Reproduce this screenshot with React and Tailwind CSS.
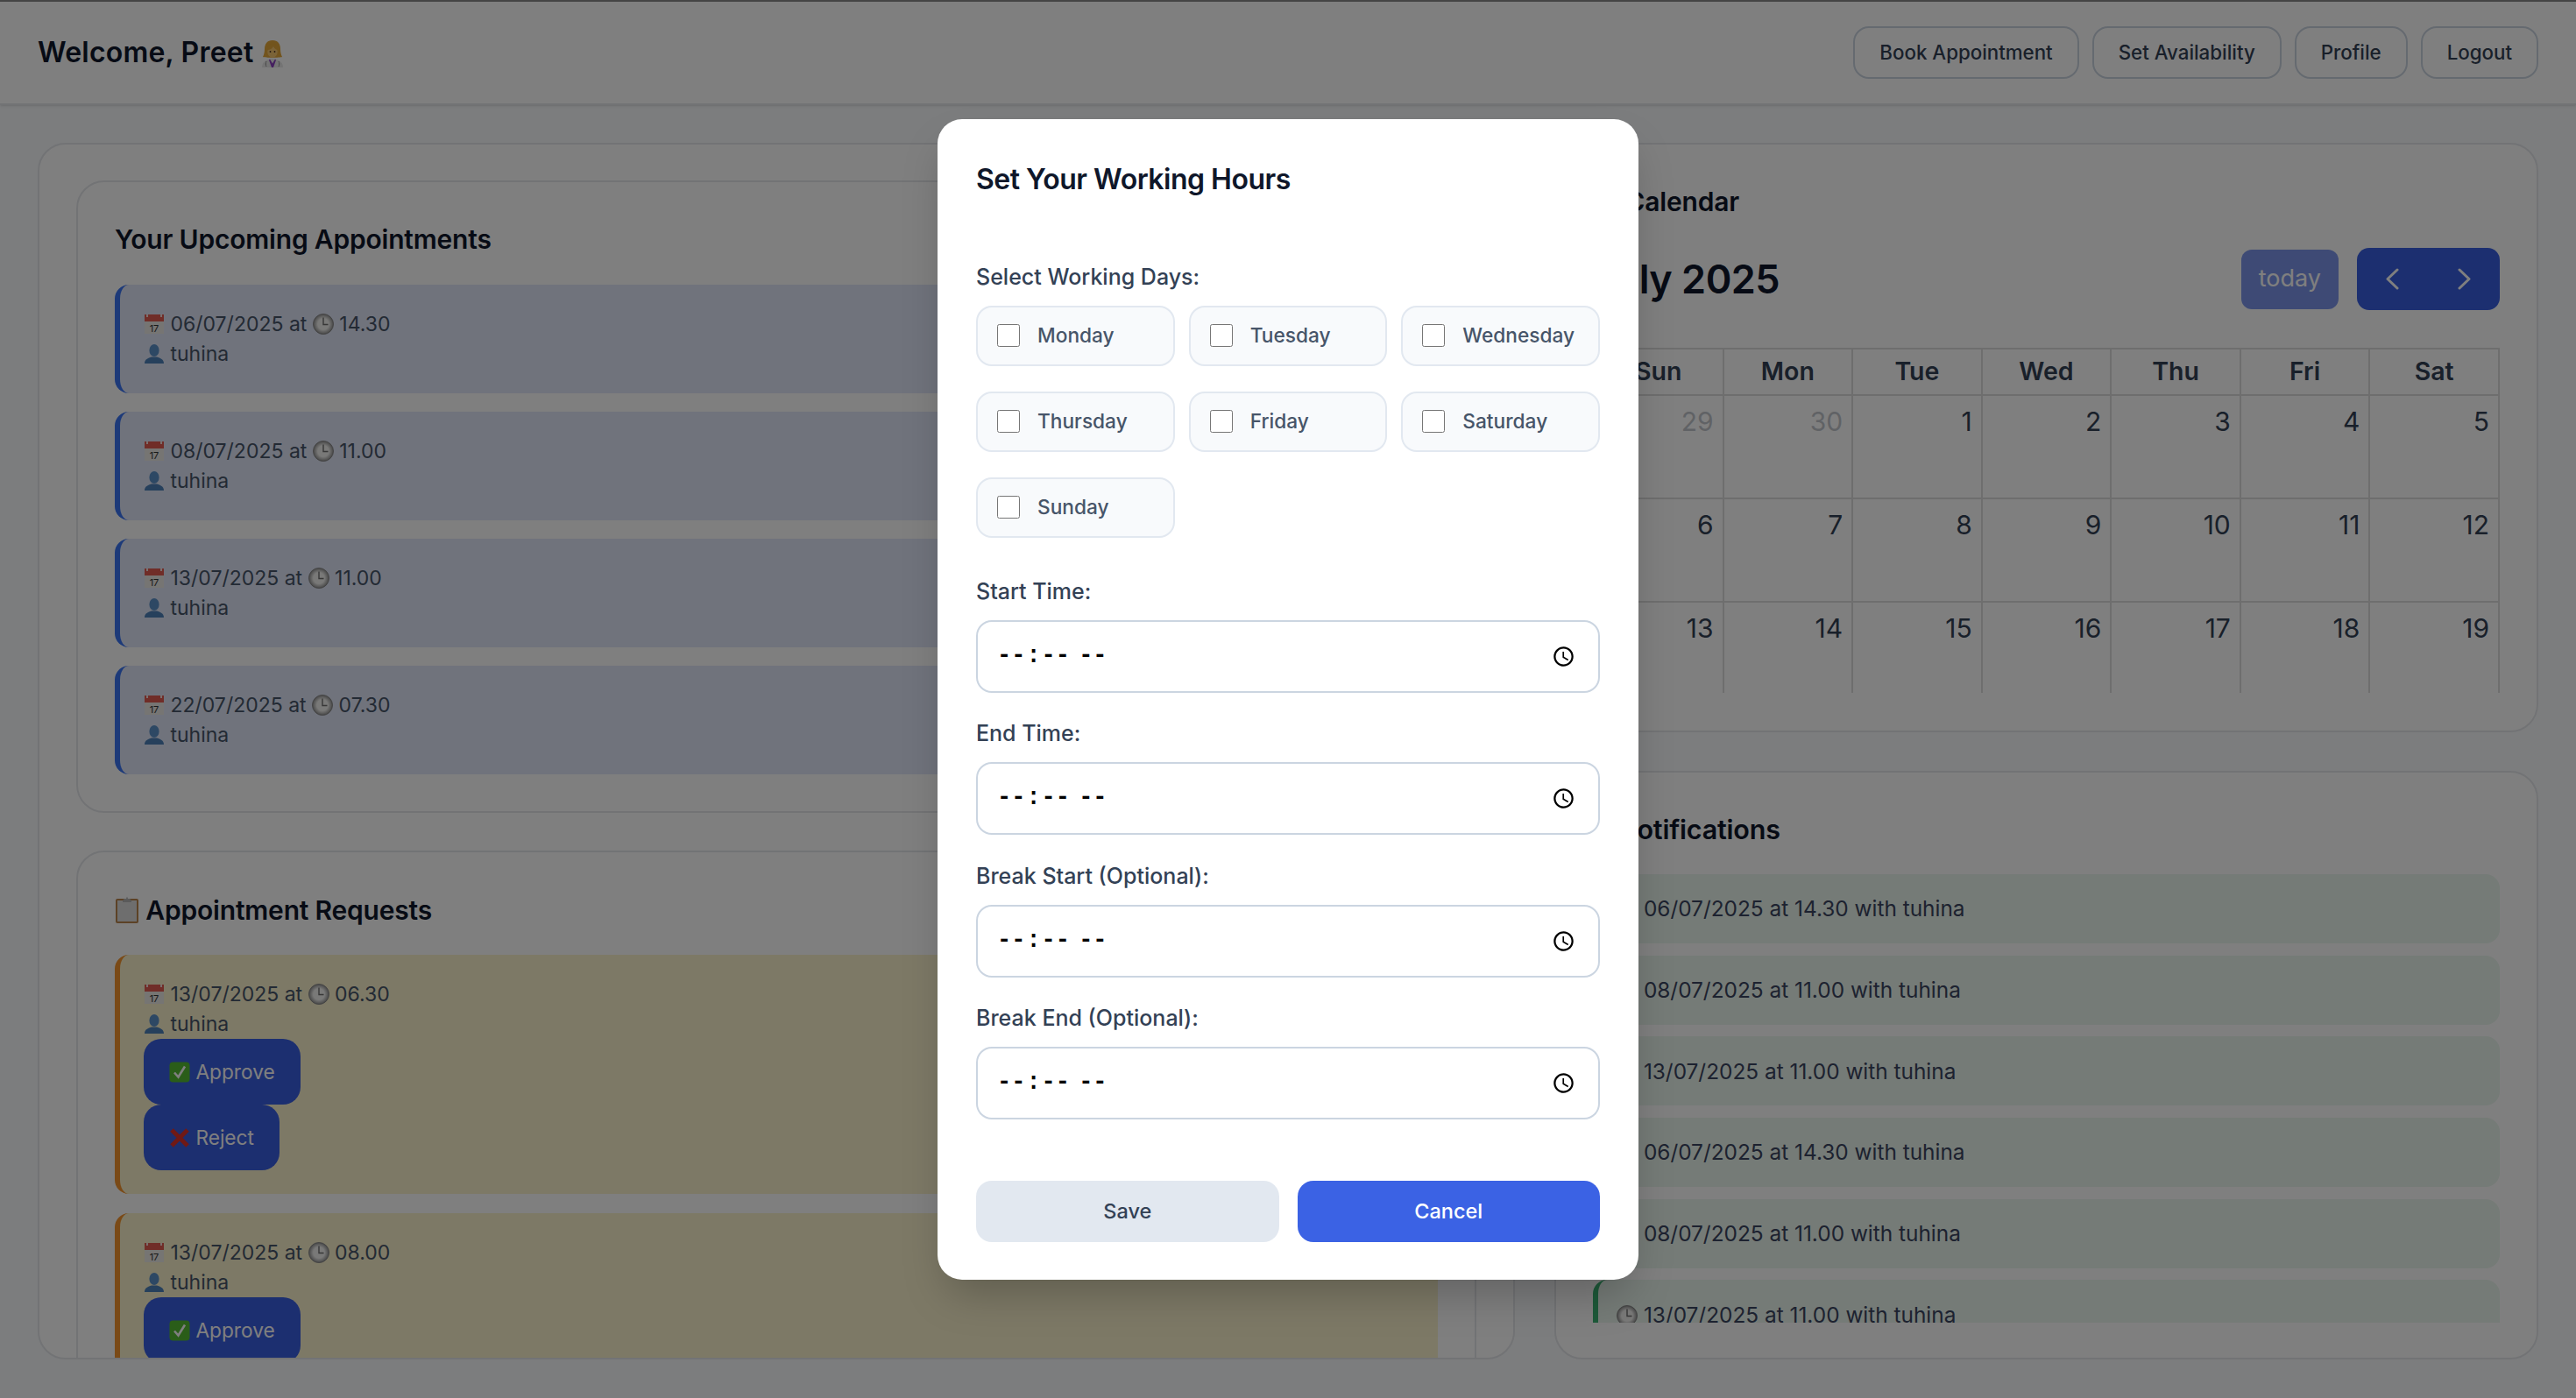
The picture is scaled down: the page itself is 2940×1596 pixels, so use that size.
import React from 'react';

const appointments = [
  { date: '06/07/2025', time: '14.30' },
  { date: '08/07/2025', time: '11.00' },
  { date: '13/07/2025', time: '11.00' },
  { date: '22/07/2025', time: '07.30' },
];

const notifications = [
  '06/07/2025 at 14.30 with tuhina',
  '08/07/2025 at 11.00 with tuhina',
  '13/07/2025 at 11.00 with tuhina',
  '06/07/2025 at 14.30 with tuhina',
  '08/07/2025 at 11.00 with tuhina',
  '13/07/2025 at 11.00 with tuhina',
];

const days = ['Monday', 'Tuesday', 'Wednesday', 'Thursday', 'Friday', 'Saturday', 'Sunday'];
const weekdays = ['Sun', 'Mon', 'Tue', 'Wed', 'Thu', 'Fri', 'Sat'];
const weeks = [
  [29, 30, 1, 2, 3, 4, 5],
  [6, 7, 8, 9, 10, 11, 12],
  [13, 14, 15, 16, 17, 18, 19],
];
const timeFields = ['Start Time:', 'End Time:', 'Break Start (Optional):', 'Break End (Optional):'];

// Emoji are drawn, there is no colour emoji font in the sandbox
function CalendarEmoji() {
  return (
    <svg viewBox="0 0 24 24" className="inline-block w-[24px] h-[24px] align-[-4px]">
      <rect x="1" y="1" width="22" height="22" fill="#ecebe6" />
      <rect x="1" y="1" width="22" height="8" fill="#e05a50" />
      <path d="M4 1v3M20 1v3" stroke="#fff" strokeWidth="1.6" />
      <text x="12" y="20.5" fontSize="11" textAnchor="middle" fill="#333" fontFamily="Inter, sans-serif">17</text>
    </svg>
  );
}

function ClockEmoji() {
  return (
    <svg viewBox="0 0 24 24" className="inline-block w-[24px] h-[24px] align-[-4px]">
      <defs>
        <radialGradient id="clockFace" cx="50%" cy="50%" r="50%">
          <stop offset="55%" stopColor="#f2f2f0" />
          <stop offset="100%" stopColor="#8e8e8e" />
        </radialGradient>
      </defs>
      <circle cx="12" cy="12" r="11.5" fill="url(#clockFace)" stroke="#8a8a8a" strokeWidth="1" />
      <path d="M12 4.5V12.5H17.5" fill="none" stroke="#6e6e6e" strokeWidth="1.4" />
    </svg>
  );
}

function PersonEmoji() {
  return (
    <svg viewBox="0 0 24 24" className="inline-block w-[24px] h-[24px] align-[-4px]">
      <ellipse cx="12" cy="8" rx="5.6" ry="7" fill="#5a90c8" />
      <path d="M1 23c0-5 4-6 8-7.5h6c4 1.5 8 2.5 8 7.5z" fill="#4d80b8" />
    </svg>
  );
}

function DoctorEmoji() {
  return (
    <svg viewBox="0 0 26 32" className="inline-block w-[26px] h-[32px] align-[-6px]">
      <path d="M13 1C7 1 4 5 4 11c0 4-1 7-2 9 3 1 19 1 22 0-1-2-2-5-2-9 0-6-3-10-9-10z" fill="#e4a83a" />
      <ellipse cx="13" cy="14" rx="5.800" ry="6.800" fill="#f7c66f" />
      <path d="M7 12c3 0 5-1 7-4 1 2 3 4 5 4 0-4-2-7-6-7s-6 3-6 7z" fill="#e4a83a" />
      <circle cx="10.5" cy="14" r="0.9" fill="#4a3420" />
      <circle cx="15.5" cy="14" r="0.9" fill="#4a3420" />
      <path d="M1 32c0-6 4-9 12-10 8 1 12 4 12 10z" fill="#e8e8e8" />
      <path d="M10 22.5l3 5 3-5 1 1-3 8.500h-2l-3-8.500z" fill="#8a3fc0" />
      <path d="M6 25c-1 2-1 4 0 6M20 25c1 2 1 4 0 6" stroke="#8d8d8d" strokeWidth="1" fill="none" />
    </svg>
  );
}

function ClipboardEmoji() {
  return (
    <svg viewBox="0 0 28 32" className="inline-block w-[28px] h-[32px] align-[-5px]">
      <rect x="1" y="3" width="26" height="28" rx="2" fill="#b8854d" />
      <rect x="3" y="5" width="22" height="24" fill="#dcdcdc" />
      <path d="M9 5l2-2h2l1-2.500 1 2.500h2l2 2v2h-10z" fill="#b5b5b5" />
    </svg>
  );
}

function CheckEmoji() {
  return (
    <svg viewBox="0 0 24 24" className="inline-block w-[24px] h-[24px] align-[-4px]">
      <rect x="0.5" y="0.5" width="23" height="23" rx="4" fill="#55bb32" />
      <path d="M6 12.500l4.500 5 7.500-12" fill="none" stroke="#fff" strokeWidth="2.6" />
    </svg>
  );
}

function CrossEmoji() {
  return (
    <svg viewBox="0 0 24 24" className="inline-block w-[24px] h-[24px] align-[-4px]">
      <path d="M3 3l18 18M21 3L3 21" stroke="#e0322a" strokeWidth="5" />
    </svg>
  );
}

function BellEmoji() {
  return (
    <svg viewBox="0 0 24 24" className="inline-block w-[20px] h-[20px] align-[-2px]">
      <path d="M12 2c-4 0-7 3-7 8 0 4-1 6-3 8h20c-2-2-3-4-3-8 0-5-3-8-7-8z" fill="#f4b93a" />
      <circle cx="12" cy="20" r="2.500" fill="#c98a1c" />
    </svg>
  );
}

function AppointmentInfo({ date, time }) {
  return (
    <>
      <div>
        <CalendarEmoji /> {date} at <ClockEmoji /> {time}
      </div>
      <div>
        <PersonEmoji /> tuhina
      </div>
    </>
  );
}

function RequestCard({ time, showReject }) {
  return (
    <div className="shrink-0 bg-[#fbf2cd] border-l-[6px] border-[#f4952f] rounded-[16px] pt-[28px] pb-[27px] pl-[27px] text-[23px] leading-[34px] text-[#475569]">
      <AppointmentInfo date="13/07/2025" time={time} />
      <div className="flex flex-col items-start">
        <button className="h-[75px] px-[29px] rounded-[20px] bg-[#385ee0] text-white text-[22.700px]">
          <CheckEmoji /> Approve
        </button>
        {showReject && (
          <button className="h-[75px] px-[29px] rounded-[20px] bg-[#385ee0] text-white text-[22.700px]">
            <CrossEmoji /> Reject
          </button>
        )}
      </div>
    </div>
  );
}

function WorkingHoursModal() {
  return (
    <div className="absolute inset-0 bg-black/50 flex items-center justify-center">
      <div className="w-[800px] h-[1325px] bg-white rounded-[28px] px-[44px] pt-[49px] shadow-2xl">
        <h2 className="text-[32px] leading-[40px] font-semibold tracking-[-0.5px] text-[#0f172a]">Set Your Working Hours</h2>

        <p className="mt-[74px] mb-[16px] text-[25px] leading-[34px] font-medium text-[#334155]">Select Working Days:</p>
        <div className="grid grid-cols-3 gap-x-[16px] gap-y-[29px]">
          {days.map((day) => (
            <label key={day} className="h-[69px] flex items-center gap-[20px] pl-[22px] bg-[#f8fafc] border-2 border-[#e2e8f0] rounded-[18px] text-[22.700px] font-medium text-[#475569]">
              <input type="checkbox" className="w-[26px] h-[26px] m-0" />
              {day}
            </label>
          ))}
        </div>

        <div className="mt-[44px] flex flex-col gap-[29.500px]">
          {timeFields.map((field) => (
            <div key={field}>
              <p className="mb-[16px] text-[25px] leading-[34px] font-medium text-[#334155]">{field}</p>
              <input
                type="time"
                className="w-full h-[83px] pl-[21px] pr-[26px] bg-white border-2 border-[#cbd5e1] rounded-[18px] text-[27px] font-bold font-[family-name:'Liberation_Mono',monospace] text-black [&::-webkit-calendar-picker-indicator]:w-[27px] [&::-webkit-calendar-picker-indicator]:h-[27px] [&::-webkit-calendar-picker-indicator]:p-0"
              />
            </div>
          ))}
        </div>

        <div className="mt-[70px] grid grid-cols-2 gap-[21px]">
          <button className="h-[70px] rounded-[18px] bg-[#e2e8f0] text-[#334155] text-[23.500px] font-medium">Save</button>
          <button className="h-[70px] rounded-[18px] bg-[#3b62e4] text-white text-[23.500px] font-medium">Cancel</button>
        </div>
      </div>
    </div>
  );
}

export default function App() {
  return (
    <div className="relative w-[2940px] h-[1596px] overflow-hidden bg-[#f8fafc] font-[family-name:Inter,sans-serif] text-[#0f172a]">
      <header className="h-[120px] bg-white border-t-2 border-t-[#888888] border-b-2 border-b-[#e5e7eb] shadow-sm px-[43px] flex items-center justify-between">
        <h1 className="text-[32px] tracking-[0.2px] font-semibold">
          Welcome, Preet <DoctorEmoji />
        </h1>
        <nav className="flex gap-[15px]">
          {['Book Appointment', 'Set Availability', 'Profile', 'Logout'].map((item) => (
            <button key={item} className="h-[60px] px-[28px] bg-white border-2 border-[#cbd5e1] rounded-[18px] text-[22.300px] font-medium text-[#334155]">
              {item}
            </button>
          ))}
        </nav>
      </header>

      <main className="grid grid-cols-[1686px_1123px] gap-[45px] px-[43px] pt-[43px]">
        <section className="h-[1389px] overflow-hidden bg-white border-2 border-[#e5e7eb] rounded-[32px] px-[42px] pt-[41px] flex flex-col gap-[43px]">
          <div className="shrink-0 bg-white border-2 border-[#e5e7eb] rounded-[32px] px-[42px] pt-[45px] pb-[42px]">
            <h2 className="text-[30px] leading-[40px] tracking-[-0.2px] font-semibold mb-[32px]">Your Upcoming Appointments</h2>
            <div className="flex flex-col gap-[21px]">
              {appointments.map((a) => (
                <div key={a.date} className="h-[124px] bg-[#e0e6f8] border-l-[6px] border-[#3b74f2] rounded-[16px] pt-[28px] pl-[27px] text-[23px] leading-[34px] text-[#475569]">
                  <AppointmentInfo date={a.date} time={a.time} />
                </div>
              ))}
            </div>
          </div>

          <div className="shrink-0 bg-white border-2 border-[#e5e7eb] rounded-[32px] px-[42px] pt-[46px]">
            <h2 className="text-[30px] leading-[40px] tracking-[-0.2px] font-semibold mb-[31px]">
              <ClipboardEmoji /> Appointment Requests
            </h2>
            <div className="flex flex-col gap-[22px]">
              <RequestCard time="06.30" showReject />
              <RequestCard time="08.00" showReject />
            </div>
          </div>
        </section>

        <div className="flex flex-col gap-[44px]">
          <section className="h-[673px] bg-white border-2 border-[#e5e7eb] rounded-[32px] px-[42px] pt-[45px]">
            <h2 className="pl-[6px] text-[30px] leading-[40px] tracking-[-0.2px] font-semibold">
              <CalendarEmoji /> Calendar
            </h2>
            <div className="mt-[33px] mb-[43px] h-[71px] flex items-center justify-between">
              <div className="text-[45px] tracking-[-0.5px] font-semibold">July 2025</div>
              <div className="flex items-center gap-[21px]">
                <button className="h-[68px] px-[20px] rounded-[12px] bg-[#385ee0] opacity-65 text-white text-[27px]">today</button>
                <div className="h-[71px] w-[163px] rounded-[14px] bg-[#385ee0] flex">
                  <button className="flex-1 flex items-center justify-center">
                    <svg viewBox="0 0 15 25" className="w-[15px] h-[25px]">
                      <path d="M13 2L2 12.500L13 23" fill="none" stroke="#fff" strokeWidth="3" strokeLinecap="round" strokeLinejoin="round" />
                    </svg>
                  </button>
                  <button className="flex-1 flex items-center justify-center">
                    <svg viewBox="0 0 15 25" className="w-[15px] h-[25px]">
                      <path d="M2 2L13 12.500L2 23" fill="none" stroke="#fff" strokeWidth="3" strokeLinecap="round" strokeLinejoin="round" />
                    </svg>
                  </button>
                </div>
              </div>
            </div>
            <div className="h-[394px] overflow-hidden">
              <table className="w-full table-fixed border-collapse border-2 border-[#dddddd]">
                <thead>
                  <tr className="h-[53px]">
                    {weekdays.map((d) => (
                      <th key={d} className="border-2 border-[#dddddd] text-[28.500px] font-semibold text-[#334155]">{d}</th>
                    ))}
                  </tr>
                </thead>
                <tbody>
                  {weeks.map((week) => (
                    <tr key={week[0]} className="h-[118px]">
                      {week.map((n) => (
                        <td key={n} className={`border-2 border-[#dddddd] align-top text-right pt-[12px] pr-[10px] text-[30px] leading-[34px] text-[#334155] ${n > 28 ? 'opacity-30' : ''}`}>
                          {n}
                        </td>
                      ))}
                    </tr>
                  ))}
                </tbody>
              </table>
            </div>
          </section>

          <section className="h-[672px] bg-white border-2 border-[#e5e7eb] rounded-[32px] px-[42px] pt-[45px]">
            <h2 className="text-[30.500px] leading-[40px] tracking-[-0.2px] font-semibold mb-[31px]">
              <BellEmoji /> Notifications
            </h2>
            <div className="h-[512px] overflow-hidden flex flex-col gap-[13.700px]">
              {notifications.map((text, i) => (
                <div key={i} className="shrink-0 h-[79px] flex items-center bg-[#ebf7ee] border-l-[6px] border-[#3bb273] rounded-[16px] pl-[21px] text-[24.400px] text-[#3b4560]">
                  <span>
                    <ClockEmoji /> {text}
                  </span>
                </div>
              ))}
            </div>
          </section>
        </div>
      </main>

      <WorkingHoursModal />
    </div>
  );
}
